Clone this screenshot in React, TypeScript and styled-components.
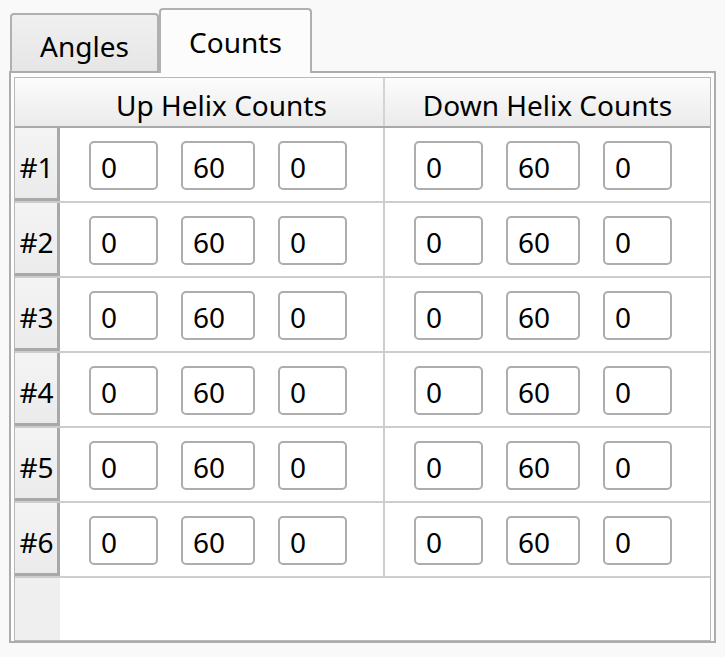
import React from "react";
import styled, { createGlobalStyle } from "styled-components";

const Global = createGlobalStyle`
  html, body { margin: 0; padding: 0; background: #f9f9f9; }
  body { font-family: "Noto Sans", "Open Sans", sans-serif; color: #000; }
  * { box-sizing: border-box; }
`;

const Page = styled.div`
  width: 725px;
  height: 657px;
  padding: 8px 0 0 9px;
  display: flex;
  flex-direction: column;
`;

const TabStrip = styled.div`
  display: flex;
  align-items: flex-end;
  height: 63px;
  padding-left: 1px;
  position: relative;
  z-index: 1;
`;

const Tab = styled.div<{ $active?: boolean }>`
  display: flex;
  align-items: center;
  justify-content: center;
  font-size: 28px;
  line-height: 1;
  border: 2px solid #b0b0b0;
  border-bottom: none;
  border-radius: 4px 4px 0 0;
  width: ${(p) => (p.$active ? 153 : 149)}px;
  height: ${(p) => (p.$active ? 65 : 58)}px;
  margin-bottom: ${(p) => (p.$active ? -2 : 0)}px;
  background: ${(p) => (p.$active ? "#fcfcfc" : "linear-gradient(#f0f0f0, #e6e6e6)")};
  padding-top: ${(p) => (p.$active ? 0 : 6)}px;
`;

const Panel = styled.div`
  width: 707px;
  height: 572px;
  border: 2px solid #acacac;
  background: #fdfdfd;
  padding: 4px 3px 0 3px;
  display: flex;
`;

const Grid = styled.div`
  flex: 1;
  border: 1px solid #b8b8b8;
  background: #fff;
  display: flex;
  flex-direction: column;
`;

const HeaderRow = styled.div`
  display: grid;
  grid-template-columns: 45px 325px 325px;
  height: 50px;
  background: linear-gradient(#fcfcfc, #ebebeb);
  border-bottom: 2px solid #a9a9a9;
`;

const HeaderCell = styled.div<{ $sep?: boolean }>`
  display: flex;
  align-items: center;
  justify-content: center;
  font-size: 28px;
  line-height: 1;
  padding-top: 6px;
  border-right: ${(p) => (p.$sep ? "2px solid #d4d4d4" : "none")};
`;

const Row = styled.div`
  display: grid;
  grid-template-columns: 45px 325px 325px;
  height: 75px;
  border-bottom: 2px solid #cdcdcd;
`;

const RowHeader = styled.div`
  display: flex;
  align-items: center;
  justify-content: center;
  font-size: 28px;
  line-height: 1;
  padding-top: 8px;
  padding-left: 1px;
  background: linear-gradient(#f4f4f4, #ebebeb);
  border-right: 3px solid #a9a9a9;
  border-bottom: 3px solid #a9a9a9;
`;

const Cell = styled.div<{ $sep?: boolean }>`
  display: flex;
  align-items: center;
  gap: 23px;
  padding-left: 29px;
  padding-top: 1px;
  border-right: ${(p) => (p.$sep ? "2px solid #cdcdcd" : "none")};
`;

const Box = styled.div<{ $wide?: boolean }>`
  width: ${(p) => (p.$wide ? 74 : 69)}px;
  height: 49px;
  border: 2px solid #adadad;
  border-radius: 5px;
  background: #fff;
  font-size: 28px;
  line-height: 1;
  display: flex;
  align-items: center;
  padding-left: 10px;
  padding-top: 3px;
`;

const Filler = styled.div`
  flex: 1;
  display: grid;
  grid-template-columns: 45px 1fr;
`;

const FillerHeader = styled.div`
  background: #efefef;
`;

const rows = [1, 2, 3, 4, 5, 6];

const Triple = () => (
  <>
    <Box>0</Box>
    <Box $wide>60</Box>
    <Box>0</Box>
  </>
);

export default function App() {
  return (
    <Page>
      <Global />
      <TabStrip>
        <Tab>Angles</Tab>
        <Tab $active>Counts</Tab>
      </TabStrip>
      <Panel>
        <Grid>
          <HeaderRow>
            <HeaderCell />
            <HeaderCell $sep>Up Helix Counts</HeaderCell>
            <HeaderCell>Down Helix Counts</HeaderCell>
          </HeaderRow>
          {rows.map((n) => (
            <Row key={n}>
              <RowHeader>#{n}</RowHeader>
              <Cell $sep>
                <Triple />
              </Cell>
              <Cell>
                <Triple />
              </Cell>
            </Row>
          ))}
          <Filler>
            <FillerHeader />
            <div />
          </Filler>
        </Grid>
      </Panel>
    </Page>
  );
}
